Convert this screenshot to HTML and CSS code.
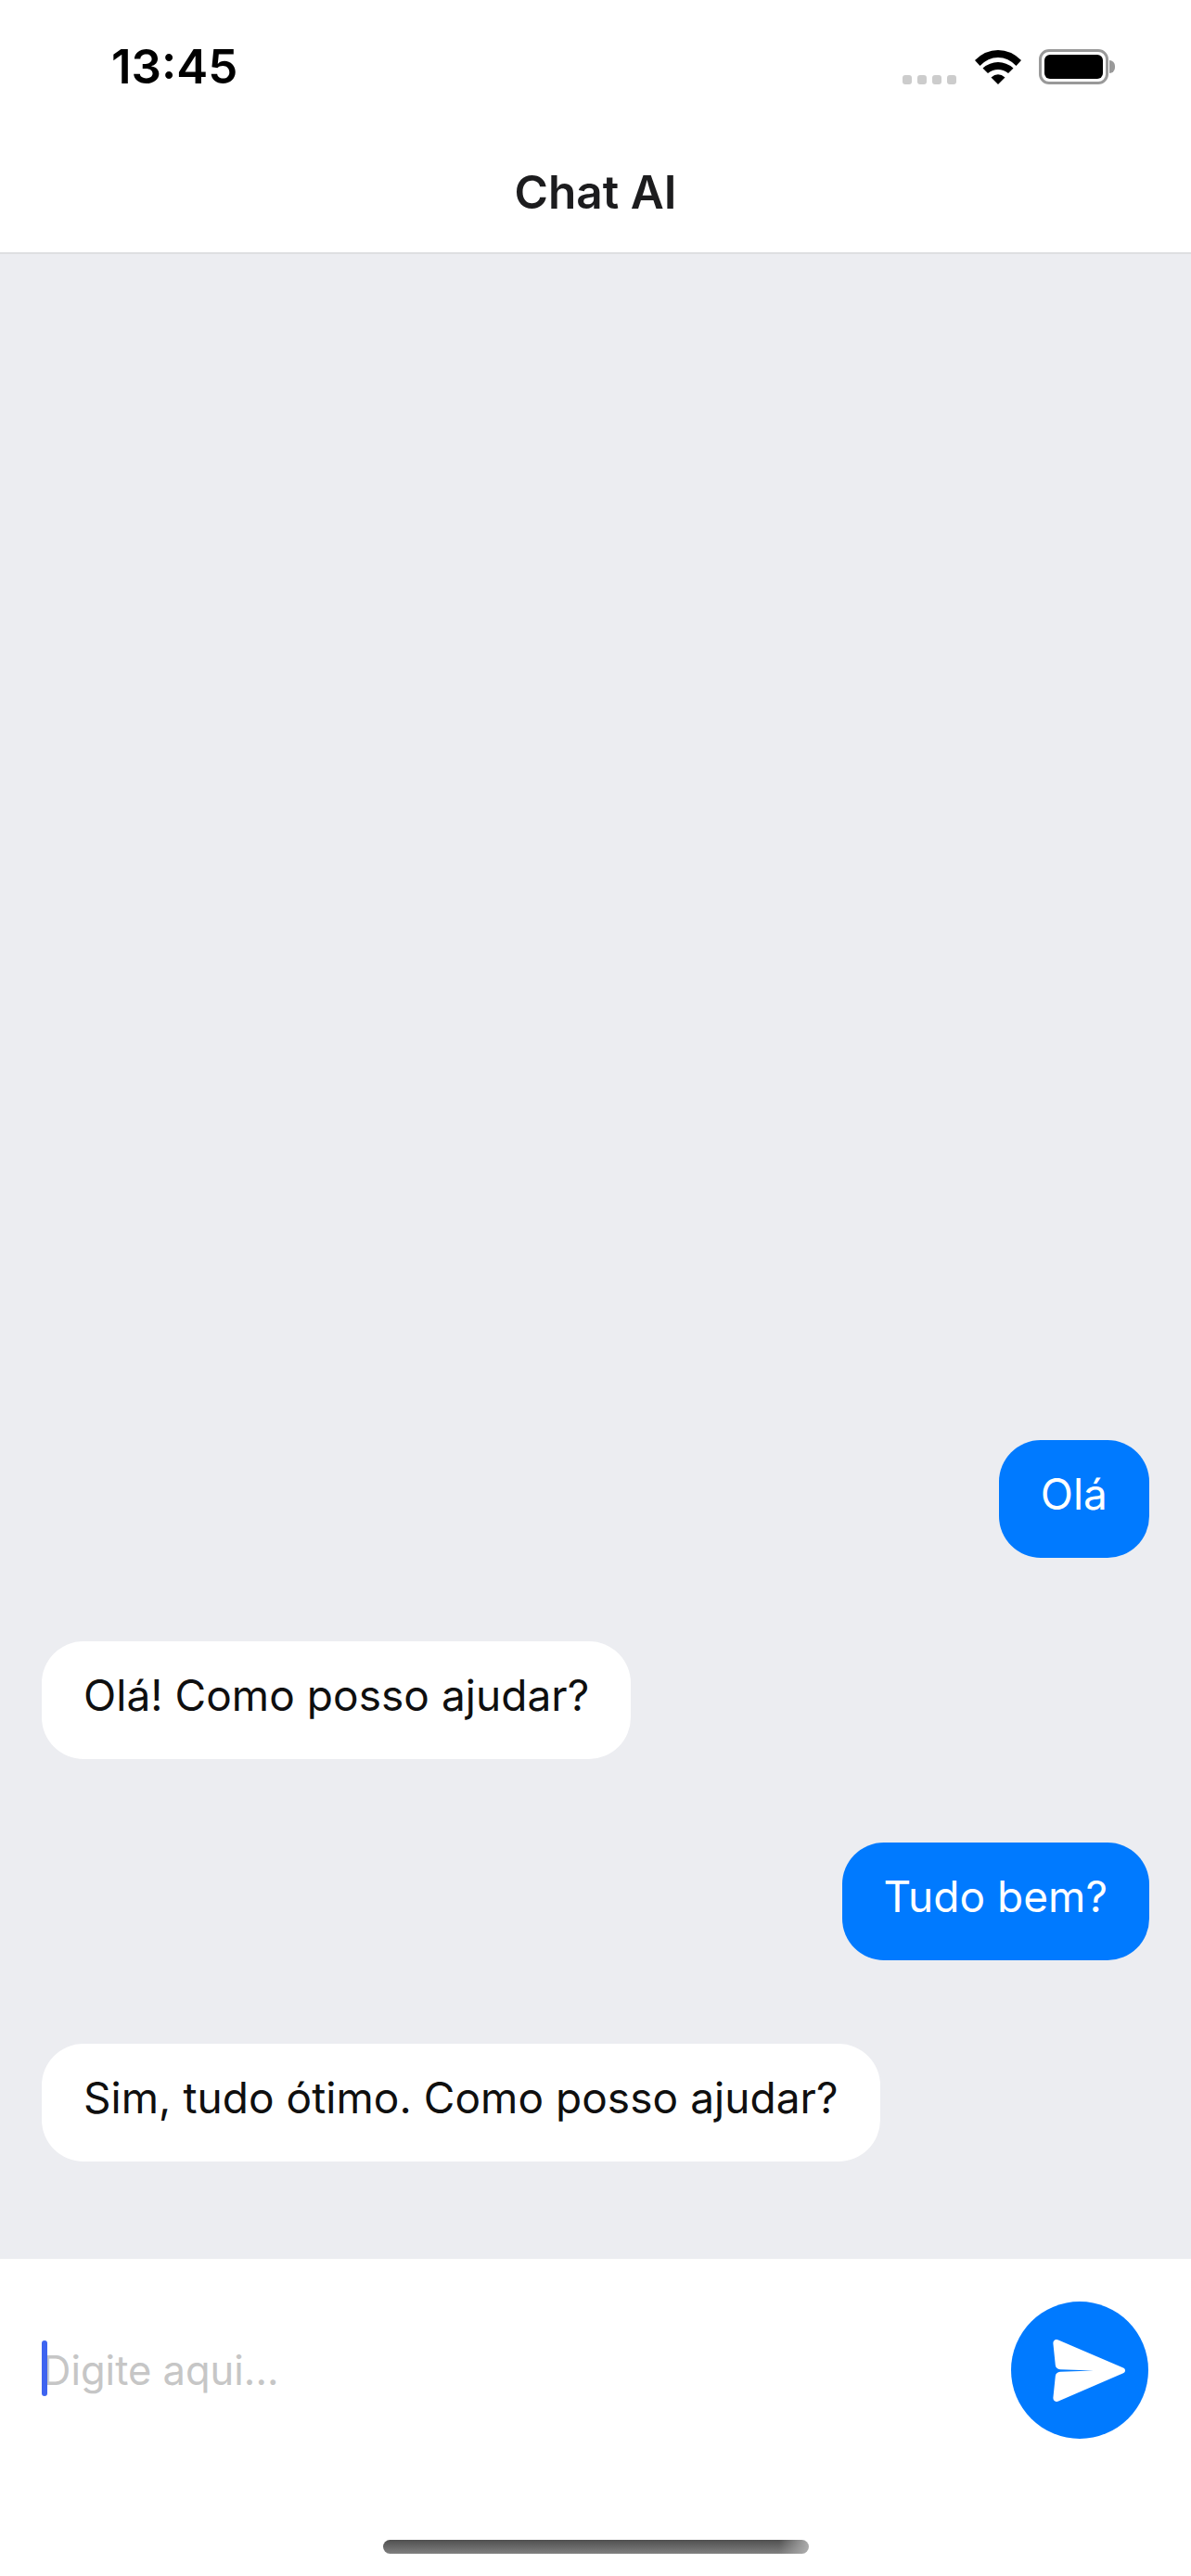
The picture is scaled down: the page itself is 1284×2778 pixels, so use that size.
FILE: index.html
```html
<!DOCTYPE html>
<html lang="pt-BR">
<head>
    <meta charset="UTF-8" />
    <title>Chat AI</title>
    <link rel="stylesheet" href="styles.css">
</head>
<body>
    <div id="app">
        <div class="status-bar">
            <span class="status-time">13:45</span>
            <div class="status-icons">
                <div class="signal-dots">
                    <span></span><span></span><span></span><span></span>
                </div>
                <svg class="wifi-icon" width="50" height="37" viewBox="0 0 50 37">
                    <path d="M0 11Q11 0 25 0T50 11L44.500 17Q36 8 25 8T5.500 17z" />
                    <path d="M8.500 19.500Q16 13 25 13T41.500 19.500L36 25Q31 21 25 21T14 25z" />
                    <path d="M17.500 29.500Q25 23 32.500 29.500L25 37z" />
                </svg>
                <div class="battery">
                    <div class="battery-level"></div>
                </div>
            </div>
        </div>
        <header>Chat AI</header>

        <div id="messages">
            <div class="bubble sent">Olá</div>
            <div class="bubble received">Olá! Como posso ajudar?</div>
            <div class="bubble sent">Tudo bem?</div>
            <div class="bubble received">Sim, tudo ótimo. Como posso ajudar?</div>
        </div>

        <div class="composer">
            <div class="composer-row">
                <div class="text-field">
                    <span class="caret"></span>
                    <span class="placeholder">Digite aqui...</span>
                </div>
                <button class="send-btn" aria-label="Enviar">
                    <svg width="78" height="67" viewBox="0 0 78 67">
                        <path fill="#fff" d="M6 .4 76 30.600C78.700 31.800 78.700 35 76 36.200L6 66.600C3 67.900 .2 66 .4 62.800L2.800 39.500C3.100 36.500 5 35.200 8 34.800L44 33.500 8 32.200C5 31.800 3.100 30.500 2.800 27.500L.4 4.200C.2 1 3-.9 6 .4z" />
                    </svg>
                </button>
            </div>
            <div class="home-bar"></div>
        </div>
    </div>
</body>
</html>
```

FILE: styles.css
```css
* {
    box-sizing: border-box;
}
body {
    margin: 0;
    padding: 0;
    font-family: Inter, "Liberation Sans", sans-serif;
    background-color: white;
}
#app {
    height: 2778px;
    display: flex;
    flex-direction: column;
}
.status-bar {
    height: 108px;
    padding: 0 89px 0 120px;
    display: flex;
    justify-content: space-between;
    align-items: flex-start;
}
.status-time {
    margin-top: 44px;
    font-size: 51px;
    line-height: 56px;
    font-weight: 600;
    color: #000;
}
.status-icons {
    margin-top: 53px;
    display: flex;
    align-items: flex-end;
}
.signal-dots {
    display: flex;
    gap: 6px;
    margin-right: 20px;
}
.signal-dots span {
    width: 10px;
    height: 10px;
    border-radius: 3px;
    background-color: #cccccc;
}
.wifi-icon {
    margin-right: 19px;
}
.battery {
    position: relative;
    width: 75px;
    height: 38px;
    padding: 3px;
    border: 3px solid #999;
    border-radius: 11px;
}
.battery::after {
    content: "";
    position: absolute;
    right: -10px;
    top: 9px;
    width: 6px;
    height: 14px;
    border-radius: 0 6px 6px 0;
    background-color: #999;
}
.battery-level {
    height: 100%;
    border-radius: 6px;
    background-color: #000;
}
header {
    height: 166px;
    padding-top: 68px;
    border-bottom: 2px solid #dedfe1;
    text-align: center;
    font-size: 49.5px;
    line-height: 62px;
    font-weight: 600;
    color: #1c1c1e;
}
#messages {
    flex: 1;
    padding: 0 45px 105px;
    display: flex;
    flex-direction: column;
    justify-content: flex-end;
    gap: 90px;
    background-color: #ecedf1;
}
.bubble {
    height: 127px;
    padding: 29px 45px 0;
    border-radius: 45px;
    font-size: 46px;
    line-height: 58px;
    letter-spacing: 0.05px;
}
.bubble.sent {
    align-self: flex-end;
    background-color: #007aff;
    color: white;
}
.bubble.received {
    align-self: flex-start;
    background-color: white;
    color: #0f0f0f;
}
.composer {
    height: 342px;
    padding-top: 46px;
    background-color: white;
    display: flex;
    flex-direction: column;
    align-items: center;
}
.composer-row {
    width: 100%;
    padding: 0 46px 0 45px;
    display: flex;
    align-items: center;
    justify-content: space-between;
}
.text-field {
    position: relative;
    flex: 1;
    font-size: 43.5px;
    line-height: 60px;
}
.placeholder {
    color: #c6c6c6;
}
.caret {
    position: absolute;
    left: 0;
    top: -2px;
    width: 6px;
    height: 60px;
    border-radius: 3px;
    background-color: #3e64f0;
}
.send-btn {
    width: 148px;
    height: 148px;
    padding: 0 0 0 20px;
    border: none;
    border-radius: 50%;
    background-color: #007aff;
    display: flex;
    align-items: center;
    justify-content: center;
    cursor: pointer;
}
.home-bar {
    width: 459px;
    height: 15px;
    margin-top: 109px;
    border-radius: 8px;
    background:
        linear-gradient(to right, rgba(180, 180, 180, 0) 93%, rgba(180, 180, 180, 0.9) 100%),
        linear-gradient(to bottom, #4f4f4f, #808080);
}
```
